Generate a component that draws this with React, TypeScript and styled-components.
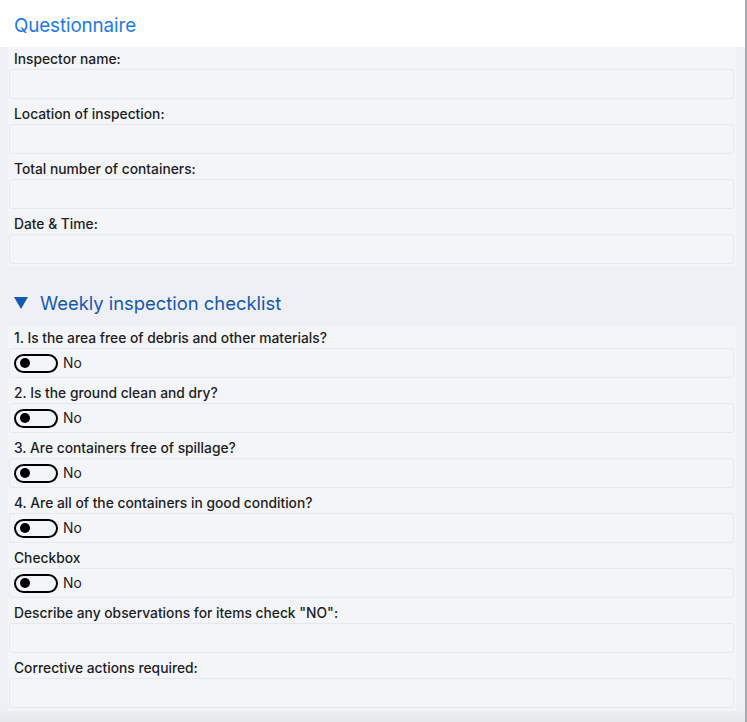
import React from "react";
import styled, { createGlobalStyle } from "styled-components";

const Global = createGlobalStyle`
  html, body { margin: 0; padding: 0; background: #eeeff4; }
  body { font-family: Inter, "Noto Sans", "Liberation Sans", sans-serif; -webkit-font-smoothing: antialiased; }
  * { box-sizing: border-box; }
`;

const Page = styled.div`
  width: 747px;
  height: 722px;
  display: flex;
  flex-direction: column;
  background: #eff0f5;
  border-right: 2px solid #a8a9ad;
  overflow: hidden;
`;

const Header = styled.header`
  height: 47px;
  flex: none;
  background: #ffffff;
  padding: 3px 0 0 14px;
  display: flex;
  align-items: center;
`;

const Title = styled.h1`
  margin: 0;
  font-size: 18.8px;
  font-weight: 400;
  color: #2279e6;
  letter-spacing: -0.1px;
`;

const Panel = styled.section`
  margin: 0 9px 0 8px;
  padding: 0 2px 0 1px;
  background: #f4f5f9;
  display: flex;
  flex-direction: column;
`;

const Field = styled.div`
  display: flex;
  flex-direction: column;
  padding-bottom: 3px;
`;

const Label = styled.label`
  height: 22px;
  line-height: 22px;
  padding: 1px 0 0 5px;
  font-size: 13.8px;
  font-weight: 500;
  color: #1d1d1f;
`;

const InputBox = styled.div`
  height: 30px;
  border: 1px solid #e7e8ed;
  border-radius: 3px;
  background: #f4f5f9;
  display: flex;
  align-items: center;
  padding-left: 4px;
  gap: 5px;
`;

const Toggle = styled.span`
  width: 44px;
  height: 19px;
  border: 2px solid #000;
  border-radius: 10px;
  display: flex;
  align-items: center;
  padding-left: 4px;
  &::before {
    content: "";
    width: 10px;
    height: 10px;
    border-radius: 50%;
    background: #000;
  }
`;

const ToggleText = styled.span`
  font-size: 13.8px;
  color: #1d1d1f;
`;

const SectionHead = styled.div`
  height: 59px;
  flex: none;
  padding: 24px 0 0 14px;
  display: flex;
  align-items: flex-start;
  gap: 12px;
`;

const Caret = styled.svg`
  margin-top: 6px;
  flex: none;
`;

const SectionTitle = styled.h2`
  margin: 0;
  font-size: 18.4px;
  line-height: 24px;
  font-weight: 400;
  color: #1559b3;
`;

const Footer = styled.div`
  flex: 1;
  background: linear-gradient(#eceef2, #e6e7eb);
`;

const topFields = ["Inspector name:", "Location of inspection:", "Total number of containers:", "Date & Time:"];
const toggles = [
  "1. Is the area free of debris and other materials?",
  "2. Is the ground clean and dry?",
  "3. Are containers free of spillage?",
  "4. Are all of the containers in good condition?",
  "Checkbox",
];
const textFields = ['Describe any observations for items check "NO":', "Corrective actions required:"];

export default function App() {
  return (
    <>
      <Global />
      <Page>
        <Header>
          <Title>Questionnaire</Title>
        </Header>
        <Panel>
          {topFields.map((f) => (
            <Field key={f}>
              <Label>{f}</Label>
              <InputBox />
            </Field>
          ))}
        </Panel>
        <SectionHead>
          <Caret width="14" height="12" viewBox="0 0 14 12">
            <path d="M0 0 H14 L7 12 Z" fill="#1559b3" />
          </Caret>
          <SectionTitle>Weekly inspection checklist</SectionTitle>
        </SectionHead>
        <Panel>
          {toggles.map((t) => (
            <Field key={t}>
              <Label>{t}</Label>
              <InputBox>
                <Toggle />
                <ToggleText>No</ToggleText>
              </InputBox>
            </Field>
          ))}
          {textFields.map((f) => (
            <Field key={f}>
              <Label>{f}</Label>
              <InputBox />
            </Field>
          ))}
        </Panel>
        <Footer />
      </Page>
    </>
  );
}
